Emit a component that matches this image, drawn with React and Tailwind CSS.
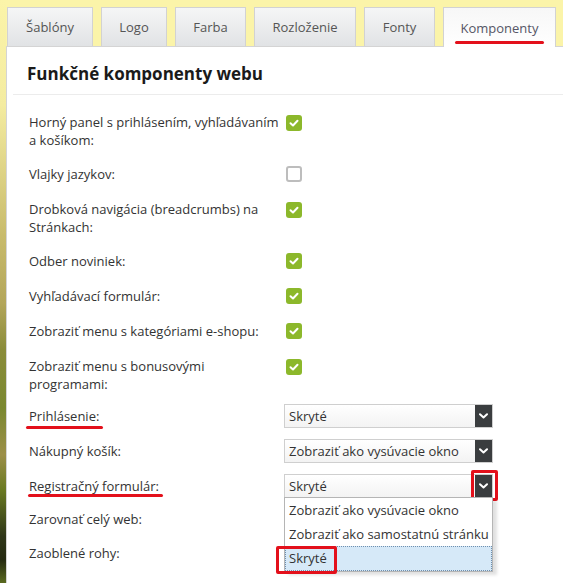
import React from 'react';

const tabs = [
  { label: 'Šablóny', w: 'w-[86px]' },
  { label: 'Logo', w: 'w-[66px]' },
  { label: 'Farba', w: 'w-[71px]' },
  { label: 'Rozloženie', w: 'w-[102px]' },
  { label: 'Fonty', w: 'w-[71px]' },
];

const Check = ({ on }) =>
  on ? (
    <span className="w-[16px] h-[16px] rounded-[3px] bg-[#8cb82b] flex items-center justify-center">
      <svg width="10" height="8" viewBox="0 0 10 8" fill="none">
        <path d="M1.5 4.2L4 6.5L8.5 1.8" stroke="#fff" strokeWidth="2" strokeLinecap="round" strokeLinejoin="round" />
      </svg>
    </span>
  ) : (
    <span className="block w-[16px] h-[16px] rounded-[3px] bg-white border-2 border-[#bdbdbd]" />
  );

const Select = ({ value }) => (
  <div className="w-[209px] h-[24px] border border-[#cfcfcf] bg-[linear-gradient(to_bottom,#ffffff,#f3f3f3)] flex items-stretch shrink-0">
    <span className="flex-1 pl-[4px] text-[13px] leading-[22px] text-[#333]">{value}</span>
    <span className="w-[17px] bg-[#3a3d3f] flex items-center justify-center">
      <svg width="9" height="6" viewBox="0 0 9 6" fill="none">
        <path d="M1 1.2L4.5 4.5L8 1.2" stroke="#fff" strokeWidth="2" strokeLinecap="round" strokeLinejoin="round" />
      </svg>
    </span>
  </div>
);

const Row = ({ lines, pb, children, underline }) => (
  <div className={`flex items-start ${pb}`}>
    <div className="w-[255px] shrink-0 text-[13px] leading-[18px] text-[#333]">
      {underline ? (
        <span className="relative inline-block">
          {lines[0]}
          <span className={`absolute h-[3px] rounded-full bg-[#e3101b] ${underline}`} />
        </span>
      ) : (
        lines.map((l, i) => <div key={i}>{l}</div>)
      )}
    </div>
    <div className="h-[18px] flex items-center">{children}</div>
  </div>
);

export default function App() {
  return (
    <div className="w-[563px] h-[583px] overflow-hidden flex bg-[#fbf4a9] font-['Open_Sans',sans-serif]">
      <div className="w-[6px] shrink-0 bg-[linear-gradient(to_bottom,#fbf4a9_0%,#f4eca0_18%,#c9bc6c_40%,#b3a65a_52%,#8a8c3a_60%,#7a8830_70%,#9c8f48_78%,#6a7a22_84%,#2f3618_92%,#252a10_96%,#5a6a20_100%)]" />
      <div className="flex-1 flex flex-col pt-[7px]">
        <div className="flex items-end gap-[8px] pl-[1px] h-[39px]">
          {tabs.map((t) => (
            <div
              key={t.label}
              className={`${t.w} h-[39px] shrink-0 border border-b-0 border-[#d2d2d2] bg-[linear-gradient(to_bottom,#f5f6f6,#e1e3e5)] flex items-center justify-center pt-[1px] text-[13px] text-[#555]`}
            >
              {t.label}
            </div>
          ))}
          <div className="relative z-10 w-[113px] h-[40px] -mb-[1px] shrink-0 border border-b-0 border-[#d2d2d2] bg-[linear-gradient(to_bottom,#f7f7f7,#ffffff)] flex flex-col items-center pt-[11px] text-[13px] text-[#556]">
            <span className="leading-[18px]">Komponenty</span>
            <span className="mt-[4px] w-[89px] h-[3px] rounded-full bg-[#e3101b]" />
          </div>
        </div>
        <div className="flex-1 bg-white border-l border-t border-[#d4d4d4]">
          <h1 className="pl-[20px] pt-[15px] text-[17px] leading-[24px] font-bold text-[#1a1a1a]">
            Funkčné komponenty webu
          </h1>
          <div className="ml-[6px] mt-[8px] h-px bg-[#ececec]" />
          <div className="pl-[22px] pt-[18px] flex flex-col">
            <Row lines={['Horný panel s prihlásením, vyhľadávaním', 'a košíkom:']} pb="pb-[16px]">
              <span className="ml-[2px] mt-[2px]"><Check on /></span>
            </Row>
            <Row lines={['Vlajky jazykov:']} pb="pb-[17px]">
              <span className="ml-[2px]"><Check /></span>
            </Row>
            <Row lines={['Drobková navigácia (breadcrumbs) na', 'Stránkach:']} pb="pb-[16px]">
              <span className="ml-[2px] mt-[2px]"><Check on /></span>
            </Row>
            <Row lines={['Odber noviniek:']} pb="pb-[17px]">
              <span className="ml-[2px]"><Check on /></span>
            </Row>
            <Row lines={['Vyhľadávací formulár:']} pb="pb-[17px]">
              <span className="ml-[2px]"><Check on /></span>
            </Row>
            <Row lines={['Zobraziť menu s kategóriami e-shopu:']} pb="pb-[17px]">
              <span className="ml-[2px]"><Check on /></span>
            </Row>
            <Row lines={['Zobraziť menu s bonusovými', 'programami:']} pb="pb-[14px]">
              <span className="ml-[2px] mt-[2px]"><Check on /></span>
            </Row>
            <Row lines={['Prihlásenie:']} pb="pb-[17px]" underline="-left-[3px] -right-[4px] top-[19px]">
              <Select value="Skryté" />
            </Row>
            <Row lines={['Nákupný košík:']} pb="pb-[17px]">
              <Select value="Zobraziť ako vysúvacie okno" />
            </Row>
            <Row lines={['Registračný formulár:']} pb="pb-[15px]" underline="-left-[1px] -right-[4px] top-[17px]">
              <div className="relative">
                <Select value="Skryté" />
                <span className="absolute left-[187px] -top-[4px] w-[27px] h-[31px] border-[3px] border-[#e3101b] rounded-[2px]" />
                <div className="absolute z-20 left-0 top-[23px] w-[209px] bg-white border border-[#b5b5b5] shadow-[4px_3px_3px_rgba(0,0,0,0.12)] text-[13px] text-[#333]">
                  <div className="h-[24px] pl-[4px] leading-[24px]">Zobraziť ako vysúvacie okno</div>
                  <div className="h-[24px] pl-[4px] leading-[24px]">Zobraziť ako samostatnú stránku</div>
                  <div className="h-[25px] pl-[3px] leading-[23px] bg-[#d6e9f8] border border-dotted border-[#6f8fae]">Skryté</div>
                  <span className="absolute -left-[9px] top-[48px] w-[61px] h-[28px] border-[3px] border-[#e3101b] rounded-[2px]" />
                </div>
              </div>
            </Row>
            <Row lines={['Zarovnať celý web:']} pb="pb-[16px]" />
            <Row lines={['Zaoblené rohy:']} pb="pb-[16px]" />
          </div>
        </div>
      </div>
    </div>
  );
}
